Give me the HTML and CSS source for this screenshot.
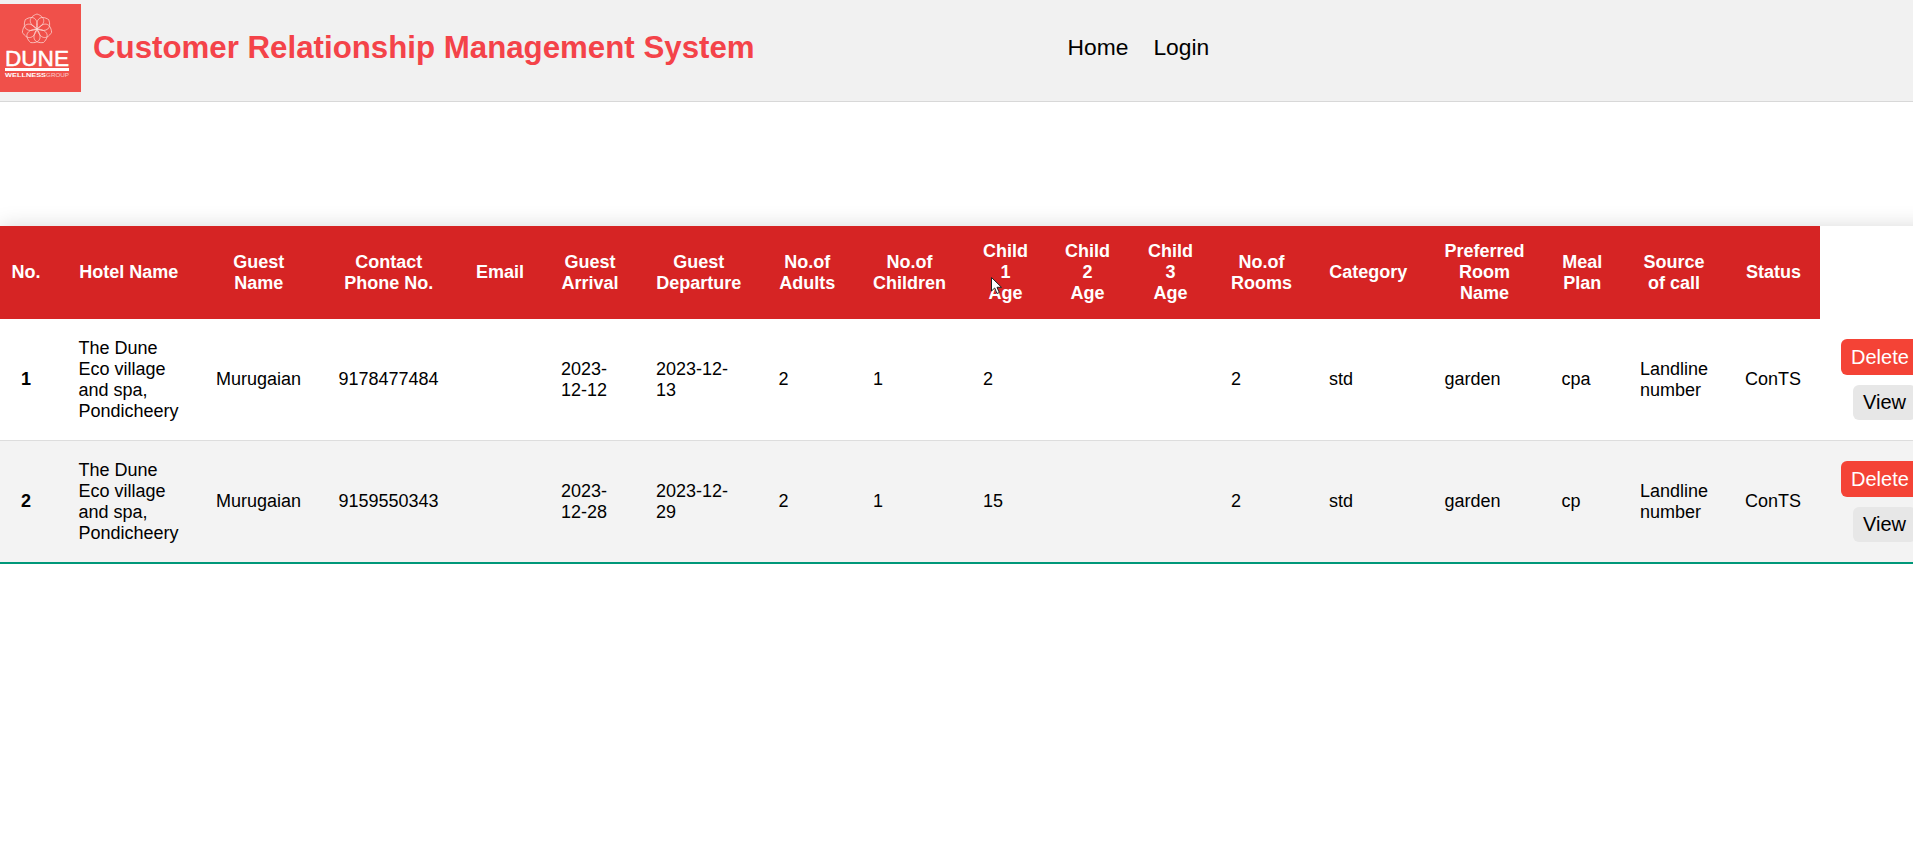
FILE: index.html

```html
<!DOCTYPE html>
<html lang="en">
<head>
  <meta charset="UTF-8" />
  <meta name="viewport" content="width=device-width, initial-scale=1.0"/>
  <title>Customer Relationship Management System</title>
  <link rel="stylesheet" href="styles.css">
</head>
<body>
  <nav class="navbar">
    <svg class="logo" viewBox="0 0 81 88" aria-label="Dune Wellness Group">
      <rect width="81" height="88" fill="#f0504a"/>
      <g fill="none" stroke="#fbd9d5" stroke-width="0.7">
        <path id="petal" d="M37 25 C28 20 28 13 37 10 C46 13 46 20 37 25Z"/>
        <use href="#petal" transform="rotate(51.4 37 25)"/>
        <use href="#petal" transform="rotate(102.8 37 25)"/>
        <use href="#petal" transform="rotate(154.2 37 25)"/>
        <use href="#petal" transform="rotate(205.6 37 25)"/>
        <use href="#petal" transform="rotate(257 37 25)"/>
        <use href="#petal" transform="rotate(308.4 37 25)"/>
      </g>
      <text class="logo-name" x="5" y="62" textLength="64" lengthAdjust="spacingAndGlyphs">DUNE</text>
      <rect x="5" y="64" width="64" height="3" fill="#fff"/>
      <text class="logo-sub" x="5" y="73" textLength="41" lengthAdjust="spacingAndGlyphs">WELLNESS</text>
      <text class="logo-group" x="46" y="73" textLength="23" lengthAdjust="spacingAndGlyphs">GROUP</text>
    </svg>
    <h1 class="brand">Customer Relationship Management System</h1>
    <ul class="nav-links">
      <li><a href="#">Home</a></li>
      <li><a href="#">Login</a></li>
    </ul>
  </nav>

  <main class="content">
    <table class="styled-table">
      <colgroup>
        <col class="w-no"><col class="w-hotel"><col class="w-guest"><col class="w-phone"><col class="w-email">
        <col class="w-arrival"><col class="w-depart"><col class="w-adults"><col class="w-children">
        <col class="w-age"><col class="w-age"><col class="w-age3"><col class="w-rooms"><col class="w-category">
        <col class="w-room"><col class="w-meal"><col class="w-source"><col class="w-status"><col class="w-actions">
      </colgroup>
      <thead>
        <tr>
          <th>No.</th>
          <th>Hotel Name</th>
          <th>Guest Name</th>
          <th>Contact Phone No.</th>
          <th>Email</th>
          <th>Guest Arrival</th>
          <th>Guest Departure</th>
          <th>No.of Adults</th>
          <th>No.of Children</th>
          <th>Child 1 Age</th>
          <th>Child 2 Age</th>
          <th>Child 3 Age</th>
          <th>No.of Rooms</th>
          <th>Category</th>
          <th>Preferred Room Name</th>
          <th>Meal Plan</th>
          <th>Source of call</th>
          <th>Status</th>
        </tr>
      </thead>
      <tbody>
        <tr>
          <td class="num">1</td>
          <td>The Dune Eco village and spa, Pondicheery</td>
          <td>Murugaian</td>
          <td>9178477484</td>
          <td></td>
          <td>2023-12-12</td>
          <td>2023-12-13</td>
          <td>2</td>
          <td>1</td>
          <td>2</td>
          <td></td>
          <td></td>
          <td>2</td>
          <td>std</td>
          <td>garden</td>
          <td>cpa</td>
          <td>Landline number</td>
          <td>ConTS</td>
          <td class="actions">
            <button class="btn btn-delete">Delete</button>
            <button class="btn btn-view">View</button>
          </td>
        </tr>
        <tr>
          <td class="num">2</td>
          <td>The Dune Eco village and spa, Pondicheery</td>
          <td>Murugaian</td>
          <td>9159550343</td>
          <td></td>
          <td>2023-12-28</td>
          <td>2023-12-29</td>
          <td>2</td>
          <td>1</td>
          <td>15</td>
          <td></td>
          <td></td>
          <td>2</td>
          <td>std</td>
          <td>garden</td>
          <td>cp</td>
          <td>Landline number</td>
          <td>ConTS</td>
          <td class="actions">
            <button class="btn btn-delete">Delete</button>
            <button class="btn btn-view">View</button>
          </td>
        </tr>
      </tbody>
    </table>
  </main>

  <svg class="cursor" viewBox="0 0 12 18" aria-hidden="true">
    <path d="M0.5 0.5 L0.5 14 L3.7 11 L6 16.5 L8.3 15.5 L6 10.3 L10.5 10.3 Z" fill="#fff" stroke="#222" stroke-width="1"/>
  </svg>
</body>
</html>
```

FILE: styles.css

```css
html, body {
  overflow-x: hidden;
}
body {
  margin: 0;
  font-family: "Liberation Sans", Arial, sans-serif;
  font-size: 18px;
  color: #000;
  background: #fff;
}

/* top bar */
.navbar {
  display: flex;
  align-items: center;
  height: 102px;
  padding-bottom: 6px;
  box-sizing: border-box;
  background: #f1f1f1;
  border-bottom: 1px solid #d8d8d8;
}
.logo {
  display: block;
  width: 81px;
  height: 88px;
  flex: none;
}
.logo text {
  fill: #fff;
  font-family: "Liberation Sans", Arial, sans-serif;
}
.logo-name {
  font-size: 22px;
  stroke: #fff;
  stroke-width: 0.5;
}
.logo-sub {
  font-size: 6px;
  font-weight: bold;
}
.logo-group {
  font-size: 6px;
  opacity: 0.7;
}
.brand {
  margin: 0 0 0 12px;
  font-size: 31.25px;
  font-weight: bold;
  color: #f44349;
  white-space: nowrap;
}
.nav-links {
  display: flex;
  gap: 25px;
  margin: 0 0 0 313px;
  padding: 0;
  list-style: none;
}
.nav-links a {
  font-size: 22.8px;
  color: #000;
  text-decoration: none;
}

/* table */
.content {
  margin-top: 124px;
}
.styled-table {
  table-layout: fixed;
  width: 1940px;
  border-collapse: collapse;
  box-shadow: 0 0 20px rgba(0,0,0,0.15);
}
.w-no { width: 59.5px; }
.w-hotel { width: 137.5px; }
.w-guest { width: 122.5px; }
.w-phone { width: 137.5px; }
.w-email { width: 85px; }
.w-arrival { width: 95px; }
.w-depart { width: 122.5px; }
.w-adults { width: 94.5px; }
.w-children { width: 110px; }
.w-age { width: 82px; }
.w-age3 { width: 84px; }
.w-rooms { width: 98px; }
.w-category { width: 115.5px; }
.w-room { width: 117px; }
.w-meal { width: 78.5px; }
.w-source { width: 105px; }
.w-status { width: 94px; }
.w-actions { width: 120px; }

.styled-table th, .styled-table td {
  padding: 15px 18px 15px 19px;
  line-height: 21px;
}
.styled-table th {
  background: #d62424;
  color: #fff;
  font-weight: bold;
  text-align: center;
}
.styled-table td {
  text-align: left;
}
.styled-table th:first-child, .styled-table td:first-child {
  padding-left: 11px;
  padding-right: 18.5px;
}
.styled-table td.num {
  font-weight: bold;
  text-align: center;
}
.styled-table tbody tr {
  border-bottom: 1px solid #ddd;
}
.styled-table tbody tr:nth-of-type(even) {
  background: #f3f3f3;
}
.styled-table tbody tr:last-of-type {
  border-bottom: 2px solid #009879;
}
.styled-table td.actions {
  padding: 20px 0;
}

/* buttons */
.btn {
  display: block;
  font-family: inherit;
  font-size: 20px;
  border: none;
  border-radius: 6px;
  padding: 6px 10px;
}
.btn-delete {
  height: 36px;
  margin: 0 0 10px 21px;
  background: #f44336;
  color: #fff;
}
.btn-view {
  height: 35px;
  margin-left: 33px;
  background: #e7e7e7;
  color: #000;
}

/* mouse pointer caught in the screenshot */
.cursor {
  position: absolute;
  left: 991px;
  top: 277px;
  width: 12px;
  height: 18px;
}
```
